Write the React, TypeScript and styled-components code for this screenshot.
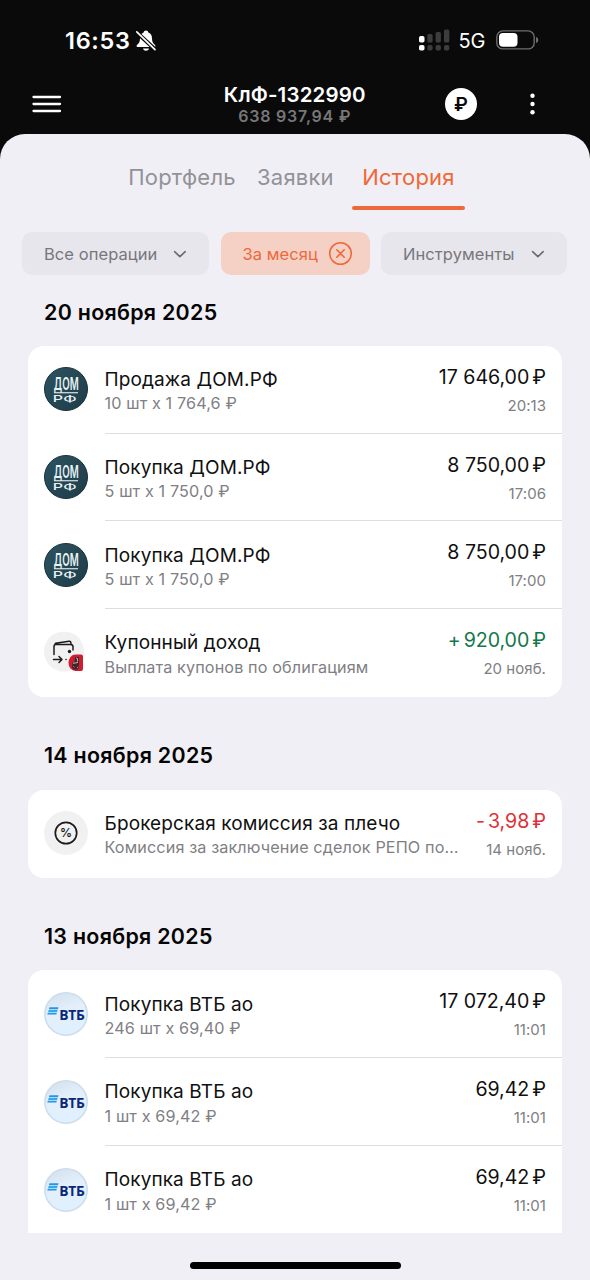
import React from "react";
import styled, { createGlobalStyle } from "styled-components";

const GlobalStyle = createGlobalStyle`
  * { box-sizing: border-box; }
  body { margin: 0; background: #f0eff5; }
  button { font: inherit; border: 0; padding: 0; background: none; color: inherit; }
`;

const Screen = styled.div`
  width: 590px;
  height: 1280px;
  overflow: hidden;
  display: flex;
  flex-direction: column;
  background: #0a0a0a;
  font-family: Inter, "Liberation Sans", sans-serif;
`;

const StatusBar = styled.div`
  height: 74px;
  padding: 7px 51px 0 65px;
  display: flex;
  align-items: center;
  justify-content: space-between;
  color: #fff;
  flex: none;
`;

const StatusGroup = styled.div`
  display: flex;
  align-items: center;
`;

const Clock = styled.span`
  width: 71px;
  font-size: 23.5px;
  font-weight: 600;
  letter-spacing: 0.7px;
  white-space: nowrap;
`;

const Network = styled.span`
  margin: 0 9.5px 0 9px;
  width: 28px;
  font-size: 20px;
  letter-spacing: -0.2px;
  line-height: 24px;
  white-space: nowrap;
`;

const Header = styled.header`
  height: 60px;
  padding: 0 48px 0 32px;
  display: grid;
  grid-template-columns: 110px 1fr 120px;
  align-items: center;
  color: #fff;
  flex: none;
`;

const Account = styled.div`
  padding: 2px 0 0 25.5px;
  display: flex;
  flex-direction: column;
  align-items: center;
  white-space: nowrap;
`;

const AccountName = styled.div`
  font-size: 20.5px;
  font-weight: 600;
  line-height: 23px;
  letter-spacing: 0.15px;
`;

const AccountSum = styled.div`
  font-size: 16px;
  font-weight: 600;
  line-height: 21px;
  letter-spacing: 0.75px;
  color: #77777a;
`;

const HeaderActions = styled.div`
  display: flex;
  align-items: center;
  justify-content: space-between;
  padding: 0 6.5px 0 23px;
`;

const CurrencyButton = styled.button`
  width: 32px;
  height: 32px;
  border-radius: 50%;
  background: #fff;
  color: #0a0a0a;
  font-size: 19px;
  line-height: 33px;
  font-weight: 600;
  text-align: center;
`;

const Sheet = styled.main`
  flex: 1;
  min-height: 0;
  border-radius: 25px 25px 0 0;
  background: #f0eff5;
  display: flex;
  flex-direction: column;
`;

const Tabs = styled.nav`
  height: 76px;
  margin: 0 125px 0 128px;
  display: flex;
  flex: none;
`;

const Tab = styled.div<{ $active?: boolean; $width: number; $gap: number }>`
  width: ${(p) => p.$width}px;
  margin-right: ${(p) => p.$gap}px;
  padding-top: 29px;
  font-size: 22px;
  font-weight: 400;
  line-height: 28px;
  letter-spacing: 0.22px;
  text-align: center;
  white-space: nowrap;
  color: ${(p) => (p.$active ? "#ee6938" : "#929297")};
  &::after {
    content: "";
    display: ${(p) => (p.$active ? "block" : "none")};
    margin-top: 14.5px;
    height: 4.5px;
    border-radius: 2px;
    background: #ee6938;
  }
`;

const Filters = styled.div`
  height: 43.5px;
  margin: 22px 22px 0;
  display: flex;
  gap: 11.5px;
  flex: none;
`;

const Chip = styled.button<{ $active?: boolean; $width: number }>`
  width: ${(p) => p.$width}px;
  height: 43.3px;
  padding: 0 ${(p) => (p.$active ? 17 : 22.5)}px 0 22px;
  border-radius: 10px;
  display: flex;
  align-items: center;
  justify-content: space-between;
  font-size: 16.5px;
  letter-spacing: 0.07px;
  white-space: nowrap;
  background: ${(p) => (p.$active ? "#f5d0c5" : "#e7e6ec")};
  color: ${(p) => (p.$active ? "#ee6938" : "#77777b")};
`;

const History = styled.div`
  margin-top: 22px;
  height: 935.5px;
  padding: 0 28px;
  overflow: hidden;
  flex: none;
`;

const Day = styled.section`
  margin-bottom: 44.5px;
`;

const DayTitle = styled.h2`
  margin: 0 0 20.3px 16px;
  font-size: 21.4px;
  font-weight: 600;
  line-height: 28px;
  letter-spacing: 0.3px;
  color: #050505;
  white-space: nowrap;
`;

const Card = styled.div<{ $open: boolean }>`
  border-radius: ${(p) => (p.$open ? "16px 16px 0 0" : "16px")};
  background: #fff;
  overflow: hidden;
`;

const Row = styled.div`
  height: 87.8px;
  padding-left: 16px;
  display: flex;
`;

const IconSlot = styled.div`
  width: 60.5px;
  padding-top: 21.6px;
  flex: none;
`;

const RowBody = styled.div<{ $line: boolean }>`
  flex: 1;
  display: flex;
  justify-content: space-between;
  padding-right: 16px;
  border-bottom: 1px solid ${(p) => (p.$line ? "#dedee1" : "transparent")};
  white-space: nowrap;
`;

const Left = styled.div`
  padding-top: 22.2px;
`;

const Right = styled.div`
  padding-top: 19px;
  text-align: right;
`;

const Title = styled.div`
  font-size: 19px;
  line-height: 24.5px;
  letter-spacing: 0.11px;
  color: #101010;
`;

const Subtitle = styled.div`
  font-size: 16.2px;
  line-height: 23px;
  letter-spacing: 0.12px;
  color: #808084;
`;

const tones = { plain: "#101010", gain: "#14774b", loss: "#e02f36" };

const Amount = styled.div<{ $tone: keyof typeof tones }>`
  font-size: 19.6px;
  line-height: 24px;
  letter-spacing: -0.03px;
  color: ${(p) => tones[p.$tone]};
`;

const Ruble = styled.span`
  margin-left: 3px;
`;

const Sign = styled.span`
  margin-right: 3px;
`;

const Stamp = styled.div`
  margin-top: 5px;
  font-size: 15px;
  line-height: 24px;
  letter-spacing: 0.05px;
  color: #808084;
`;

const HomeIndicator = styled.div`
  width: 211px;
  height: 7px;
  margin: 28.7px auto 0 189.5px;
  border-radius: 4px;
  background: #000;
  flex: none;
`;

const Svg = styled.svg`
  display: block;
  overflow: visible;
  flex: none;
`;

function MutedBell() {
  return (
    <Svg width="20" height="22" viewBox="0 0 20 22">
      <path d="M10 0.600c-1.300 0-2.200.8-2.400 2C5 3.600 4 5.800 4 8.600c0 3.500-1.200 4.800-3 6.400-.9.900-.5 2 .8 2h16.400c1.300 0 1.700-1.100.8-2-1.800-1.600-3-2.900-3-6.400 0-2.800-1-5-3.600-6-.2-1.200-1.100-2-2.400-2ZM7 18.600h6c-.4 1.400-1.500 2.200-3 2.200s-2.600-.8-3-2.200Z" fill="#fff" />
      <path d="M0 1.800 20 20.200" stroke="#0a0a0a" strokeWidth="4" />
      <path d="M.8 1.800 19 19.700" stroke="#fff" strokeWidth="1.700" strokeLinecap="round" />
    </Svg>
  );
}

function Signal() {
  return (
    <Svg width="31" height="22" viewBox="0 0 31 22">
      <g fill="#fff">
        <rect x="0" y="6" width="5.500" height="6.500" rx="1.800" />
        <rect x="0" y="15" width="5.500" height="5.500" rx="1.800" />
      </g>
      <g fill="#3d3d3e">
        <rect x="8.300" y="4" width="5.300" height="8.500" rx="1.600" />
        <rect x="16.600" y="2" width="5.300" height="10.500" rx="1.600" />
        <rect x="25" y="-0.500" width="5.300" height="13" rx="1.600" />
        <rect x="8.300" y="15" width="5.300" height="5.500" rx="1.800" />
        <rect x="16.600" y="15" width="5.300" height="5.500" rx="1.800" />
        <rect x="25" y="15" width="5.300" height="5.500" rx="1.800" />
      </g>
    </Svg>
  );
}

function Battery() {
  return (
    <Svg width="43" height="22" viewBox="0 0 43 22">
      <rect x="0.800" y="0.900" width="37.400" height="18" rx="6" fill="none" stroke="#6d6d6e" strokeWidth="1.400" />
      <rect x="3" y="3.100" width="18.500" height="13.600" rx="4" fill="#fff" />
      <path d="M40 7.100c3 .6 3 5.400 0 6Z" fill="#6d6d6e" />
    </Svg>
  );
}

function MenuIcon() {
  return (
    <Svg width="30" height="20" viewBox="0 0 30 20">
      <path d="M1.500 3h26.500M1.500 10h26.500M1.500 17h26.500" stroke="#fff" strokeWidth="2.300" strokeLinecap="round" />
    </Svg>
  );
}

function MoreIcon() {
  return (
    <Svg width="6" height="22" viewBox="0 0 6 22">
      <g fill="#fff">
        <circle cx="2.500" cy="2.800" r="2.200" />
        <circle cx="2.500" cy="11" r="2.200" />
        <circle cx="2.500" cy="19.200" r="2.200" />
      </g>
    </Svg>
  );
}

function Chevron() {
  return (
    <Svg width="14" height="8" viewBox="0 0 14 8">
      <path d="m1.600 1.700 5.300 5 5.300-5" fill="none" stroke="#69696d" strokeWidth="1.600" strokeLinecap="round" strokeLinejoin="round" />
    </Svg>
  );
}

function ClearIcon() {
  return (
    <Svg width="25" height="25" viewBox="0 0 25 25">
      <g fill="none" stroke="#ee6938" strokeWidth="1.600" strokeLinecap="round">
        <circle cx="12.500" cy="12.500" r="10.800" />
        <path d="m8.800 8.800 7.400 7.400m0-7.400-7.400 7.400" />
      </g>
    </Svg>
  );
}

function DomLogo() {
  return (
    <Svg width="44" height="44" viewBox="0 0 44 44">
      <defs>
        <linearGradient id="dom" x1="0" y1="0" x2="1" y2="1">
          <stop offset="0" stopColor="#2d5360" />
          <stop offset="1" stopColor="#1e3c48" />
        </linearGradient>
      </defs>
      <circle cx="22" cy="22" r="21.500" fill="url(#dom)" stroke="#18323c" strokeWidth="1" />
      <g fill="#e6f2f4" fontFamily="Inter, sans-serif">
        <text transform="translate(9.800 22.800) scale(.55 1)" fontSize="17.800" fontWeight="600">ДОМ</text>
        <text transform="translate(8.800 34.800) scale(1.750 1)" fontSize="9.200" fontWeight="500">РФ</text>
        <rect x="10" y="25.200" width="24" height="1.100" />
      </g>
    </Svg>
  );
}

function VtbLogo() {
  return (
    <Svg width="44" height="44" viewBox="0 0 44 44">
      <defs>
        <linearGradient id="vtb" x1="0.200" y1="0" x2="0.600" y2="1">
          <stop offset="0" stopColor="#d3e1ec" />
          <stop offset=".45" stopColor="#e3f0fb" />
          <stop offset="1" stopColor="#e0f0ff" />
        </linearGradient>
      </defs>
      <circle cx="22" cy="22" r="21.200" fill="url(#vtb)" stroke="#cbdcea" strokeWidth="1.500" />
      <g>
        <path d="M5.500 15.300h9l-.6 1.900h-9Z" fill="#2496e6" />
        <path d="M4.700 18h9l-.6 1.900h-9Z" fill="#36a8ee" />
        <path d="M3.900 20.700h9l-.6 1.900h-9Z" fill="#2496e6" />
      </g>
      <text transform="translate(15.300 28.300) scale(.92 1)" fontFamily="'Open Sans', Inter, sans-serif" fontWeight="700" fontSize="15" letterSpacing="-0.3" fill="#0b2878">ВТБ</text>
    </Svg>
  );
}

function CouponIcon() {
  return (
    <Svg width="44" height="44" viewBox="0 0 44 44">
      <circle cx="20" cy="20.500" r="20" fill="#f1f1f2" />
      <g fill="none" stroke="#1c1c1c" strokeWidth="1.500" strokeLinecap="round" strokeLinejoin="round">
        <path d="M10 23.500V15.500c0-1.300.8-2 2-2h14.500c1.500 0 2.500.8 2.500 2.300V19M11 13.200l.5-.9 13.500-2c1.300-.2 2 .5 2 2.500" />
        <path d="M9.500 28.500h8.500m-3-3 3 3-3 3M22 28.500h.1" />
      </g>
      <circle cx="25.500" cy="20.500" r="1.700" fill="#1c1c1c" />
      <path d="M31.500 23.500H37a2 2 0 0 1 2 2V38a2 2 0 0 1-2 2h-5.500a7 8.200 0 0 1 0-16.500Z" fill="#cf1c31" />
      <path d="M31 26h4v8.500h-1l1 2-1.500 2h-4l-1.500-2 .5-5h2Z" fill="#38292b" />
      <path d="m32 27 1.500.5v3M29 32.300l5-.8m-4.500 4 .8.600m2.700 0 .8.500" fill="none" stroke="#c6b4b5" strokeWidth="1" />
    </Svg>
  );
}

function CommissionIcon() {
  return (
    <Svg width="44" height="44" viewBox="0 0 44 44">
      <circle cx="22" cy="22" r="22" fill="#f1f1f2" />
      <circle cx="22" cy="22" r="10.700" fill="none" stroke="#1c1c1c" strokeWidth="1.700" />
      <text x="22" y="26.300" textAnchor="middle" fontFamily="Inter, sans-serif" fontWeight="600" fontSize="12" fill="#1c1c1c">%</text>
    </Svg>
  );
}

const icons = { dom: DomLogo, vtb: VtbLogo, coupon: CouponIcon, fee: CommissionIcon };

type Operation = {
  icon: keyof typeof icons;
  title: string;
  note: string;
  sign?: string;
  amount: string;
  tone?: keyof typeof tones;
  stamp: string;
};

const days: { date: string; more?: boolean; items: Operation[] }[] = [
  {
    date: "20 ноября 2025",
    items: [
      { icon: "dom", title: "Продажа ДОМ.РФ", note: "10 шт x 1 764,6 ₽", amount: "17 646,00", stamp: "20:13" },
      { icon: "dom", title: "Покупка ДОМ.РФ", note: "5 шт x 1 750,0 ₽", amount: "8 750,00", stamp: "17:06" },
      { icon: "dom", title: "Покупка ДОМ.РФ", note: "5 шт x 1 750,0 ₽", amount: "8 750,00", stamp: "17:00" },
      { icon: "coupon", title: "Купонный доход", note: "Выплата купонов по облигациям", sign: "+", amount: "920,00", tone: "gain", stamp: "20 нояб." },
    ],
  },
  {
    date: "14 ноября 2025",
    items: [
      { icon: "fee", title: "Брокерская комиссия за плечо", note: "Комиссия за заключение сделок РЕПО по…", sign: "-", amount: "3,98", tone: "loss", stamp: "14 нояб." },
    ],
  },
  {
    date: "13 ноября 2025",
    more: true,
    items: [
      { icon: "vtb", title: "Покупка ВТБ ао", note: "246 шт x 69,40 ₽", amount: "17 072,40", stamp: "11:01" },
      { icon: "vtb", title: "Покупка ВТБ ао", note: "1 шт x 69,42 ₽", amount: "69,42", stamp: "11:01" },
      { icon: "vtb", title: "Покупка ВТБ ао", note: "1 шт x 69,42 ₽", amount: "69,42", stamp: "11:01" },
    ],
  },
];

function OperationRow({ item, line }: { item: Operation; line: boolean }) {
  const Icon = icons[item.icon];
  return (
    <Row>
      <IconSlot><Icon /></IconSlot>
      <RowBody $line={line}>
        <Left>
          <Title>{item.title}</Title>
          <Subtitle>{item.note}</Subtitle>
        </Left>
        <Right>
          <Amount $tone={item.tone ?? "plain"}>
            {item.sign && <Sign>{item.sign}</Sign>}
            {item.amount}
            <Ruble>₽</Ruble>
          </Amount>
          <Stamp>{item.stamp}</Stamp>
        </Right>
      </RowBody>
    </Row>
  );
}

export default function App() {
  return (
    <Screen>
      <GlobalStyle />
      <StatusBar>
        <StatusGroup><Clock>16:53</Clock><MutedBell /></StatusGroup>
        <StatusGroup><Signal /><Network>5G</Network><Battery /></StatusGroup>
      </StatusBar>
      <Header>
        <MenuIcon />
        <Account>
          <AccountName>КлФ-1322990</AccountName>
          <AccountSum>638 937,94 ₽</AccountSum>
        </Account>
        <HeaderActions>
          <CurrencyButton>₽</CurrencyButton>
          <MoreIcon />
        </HeaderActions>
      </Header>
      <Sheet>
        <Tabs>
          <Tab $width={108} $gap={21}>Портфель</Tab>
          <Tab $width={76} $gap={19}>Заявки</Tab>
          <Tab $width={113} $gap={0} $active>История</Tab>
        </Tabs>
        <Filters>
          <Chip $width={187}>Все операции<Chevron /></Chip>
          <Chip $width={149} $active>За месяц<ClearIcon /></Chip>
          <Chip $width={186}>Инструменты<Chevron /></Chip>
        </Filters>
        <History>
          {days.map((day) => (
            <Day key={day.date}>
              <DayTitle>{day.date}</DayTitle>
              <Card $open={!!day.more}>
                {day.items.map((item, i) => (
                  <OperationRow key={i} item={item} line={i < day.items.length - 1} />
                ))}
              </Card>
            </Day>
          ))}
        </History>
        <HomeIndicator />
      </Sheet>
    </Screen>
  );
}
